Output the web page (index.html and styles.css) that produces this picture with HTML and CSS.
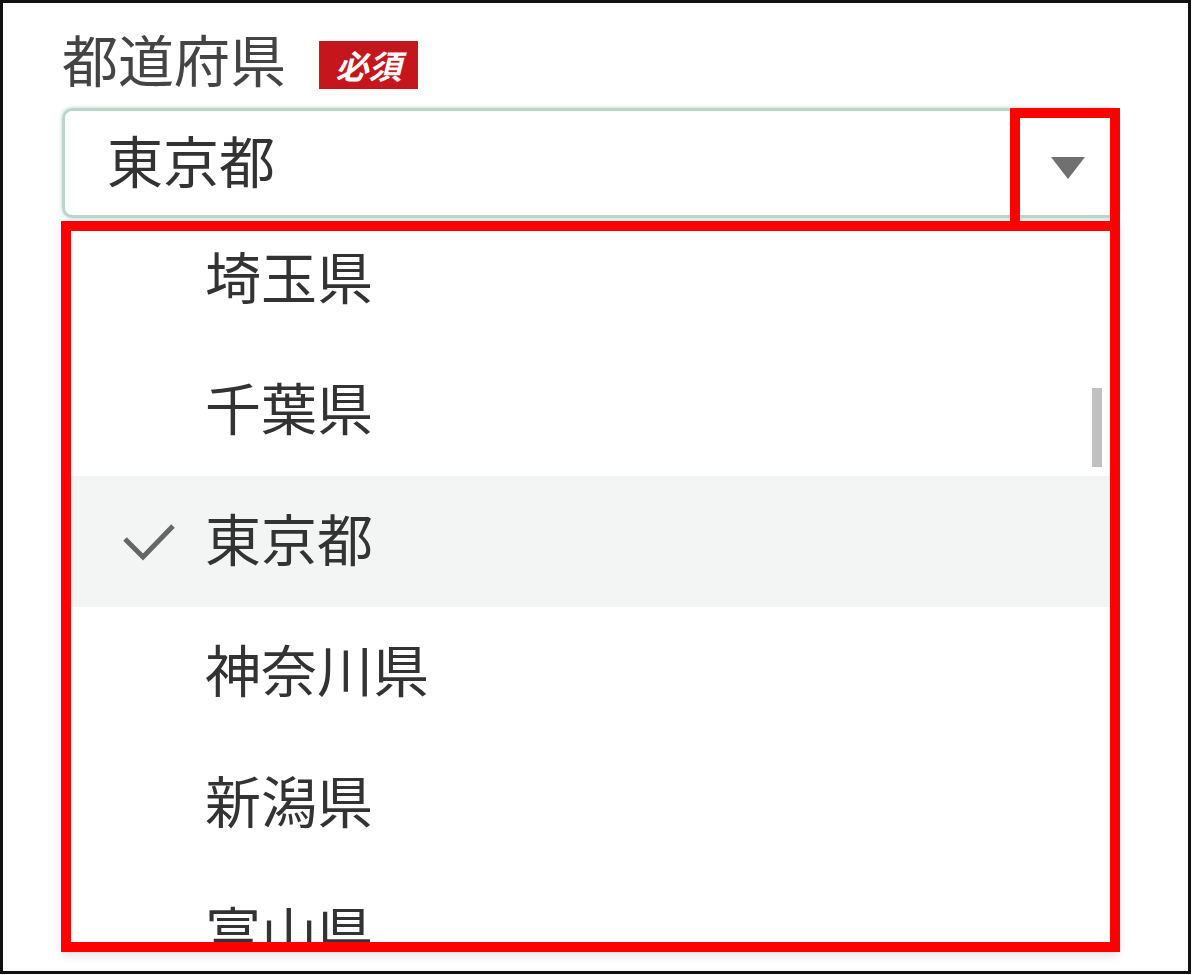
FILE: index.html
```html
<!DOCTYPE html>
<html lang="ja">
  <head>
    <meta charset="UTF-8" />
    <meta name="viewport" content="width=device-width, initial-scale=1.0" />
    <title>都道府県 選択</title>
    <link rel="stylesheet" href="styles.css">
  </head>
  <body>
    <div class="frame">
      <div class="label-row">
        <span class="label">都道府県</span>
        <span class="badge">必須</span>
      </div>

      <div class="select">
        <span class="select-value">東京都</span>
        <span class="arrow"></span>
      </div>

      <div class="menu">
        <ul class="options">
          <li class="option"><span class="check"></span>埼玉県</li>
          <li class="option"><span class="check"></span>千葉県</li>
          <li class="option selected">
            <span class="check">
              <svg width="54" height="40" viewBox="0 0 54 40">
                <polyline points="2,16 20,34 50,3" fill="none" stroke="#666" stroke-width="5" />
              </svg>
            </span>東京都
          </li>
          <li class="option"><span class="check"></span>神奈川県</li>
          <li class="option"><span class="check"></span>新潟県</li>
          <li class="option"><span class="check"></span>富山県</li>
        </ul>
        <div class="thumb"></div>
      </div>

      <!-- annotation boxes -->
      <div class="mark mark-arrow"></div>
      <div class="mark mark-menu"></div>
    </div>
  </body>
</html>
```

FILE: styles.css
```css
body {
  margin: 0;
  background: #fff;
  font-family: "Noto Sans CJK JP", "Noto Sans", sans-serif;
}
.frame {
  position: relative;
  box-sizing: border-box;
  width: 1191px;
  height: 974px;
  border: 3px solid #111;
  padding: 21px 0 0 59px;
  overflow: hidden;
}
.label-row {
  display: flex;
  align-items: center;
  gap: 33px;
  height: 67px;
}
.label {
  font-size: 56px;
  line-height: 67px;
  color: #444;
}
.badge {
  display: flex;
  align-items: center;
  justify-content: center;
  width: 99px;
  height: 48px;
  margin-top: 14px;
  background: #c4161c;
  color: #fff;
  font-size: 33px;
  font-weight: bold;
  font-style: italic;
}
.select {
  display: flex;
  align-items: center;
  justify-content: space-between;
  box-sizing: border-box;
  width: 1056px;
  height: 110px;
  margin-top: 17px;
  padding: 0 30px 0 42px;
  border: 3px solid #b9d7c8;
  border-radius: 10px;
  box-shadow: 0 0 4px rgba(120, 170, 145, 0.5);
}
.select-value {
  margin-bottom: 10px;
  font-size: 56px;
  color: #333;
}
.arrow {
  width: 0;
  height: 0;
  margin-top: 10px;
  border-left: 17px solid transparent;
  border-right: 17px solid transparent;
  border-top: 22px solid #707070;
}
.menu {
  position: relative;
  width: 1056px;
  height: 729px;
  margin-top: 3px;
  background: #fff;
  box-shadow: 0 4px 10px rgba(0, 0, 0, 0.15);
  overflow: hidden;
}
.options {
  list-style: none;
  margin: -7px 0 0;
  padding: 0;
}
.option {
  display: flex;
  align-items: center;
  box-sizing: border-box;
  height: 131px;
  padding-bottom: 10px;
  font-size: 56px;
  color: #333;
}
.option.selected {
  background: #f2f5f4;
}
.check {
  display: flex;
  align-items: center;
  width: 143px;
  margin-top: 12px;
  padding-left: 61px;
  box-sizing: border-box;
}
.thumb {
  position: absolute;
  left: 1030px;
  top: 167px;
  width: 10px;
  height: 79px;
  background: #c1c1c1;
}
.mark {
  position: absolute;
  box-sizing: border-box;
  border: 10px solid #ff0000;
}
.mark-arrow {
  left: 1007px;
  top: 105px;
  width: 110px;
  height: 123px;
}
.mark-menu {
  left: 58px;
  top: 218px;
  width: 1059px;
  height: 731px;
}
```
